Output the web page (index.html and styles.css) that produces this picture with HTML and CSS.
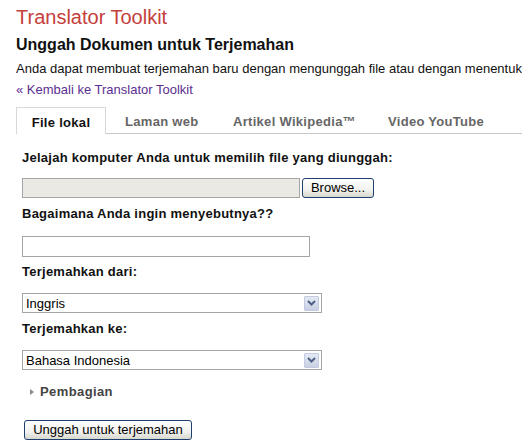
FILE: index.html
```html
<!DOCTYPE html>
<html>
<head>
<meta charset="utf-8">
<link rel="stylesheet" href="styles.css">
</head>
<body>
<div class="page">
  <h1 class="brand">Translator Toolkit</h1>
  <h2 class="heading">Unggah Dokumen untuk Terjemahan</h2>
  <p class="desc">Anda dapat membuat terjemahan baru dengan mengunggah file atau dengan menentukan URL halaman web.</p>
  <a class="back" href="#">« Kembali ke Translator Toolkit</a>
  <div class="tabs">
    <div class="tab active">File lokal</div>
    <div class="tab">Laman web</div>
    <div class="tab">Artikel Wikipedia™</div>
    <div class="tab">Video YouTube</div>
    <div class="tab-fill"></div>
  </div>
  <div class="form">
    <label class="lbl">Jelajah komputer Anda untuk memilih file yang diunggah:</label>
    <div class="file-row">
      <div class="file-box"></div>
      <button class="btn browse">Browse...</button>
    </div>
    <label class="lbl">Bagaimana Anda ingin menyebutnya??</label>
    <div class="text-box"></div>
    <label class="lbl">Terjemahkan dari:</label>
    <div class="select">
      <span class="sel-val">Inggris</span>
      <span class="sel-arrow"><svg width="9" height="6" viewBox="0 0 9 6"><path d="M1 1 L4.5 4.5 L8 1" fill="none" stroke="#4d6185" stroke-width="2"/></svg></span>
    </div>
    <label class="lbl">Terjemahkan ke:</label>
    <div class="select">
      <span class="sel-val">Bahasa Indonesia</span>
      <span class="sel-arrow"><svg width="9" height="6" viewBox="0 0 9 6"><path d="M1 1 L4.5 4.5 L8 1" fill="none" stroke="#4d6185" stroke-width="2"/></svg></span>
    </div>
    <div class="share"><span class="tri"></span>Pembagian</div>
    <button class="btn submit">Unggah untuk terjemahan</button>
  </div>
</div>
</body>
</html>
```
FILE: styles.css
```css
* { box-sizing: border-box; }
html, body { margin: 0; padding: 0; background: #fff; }
body { font-family: "Liberation Sans", Arial, sans-serif; color: #000; overflow: hidden; }
.page { padding: 0 0 0 16px; width: 522px; }
.brand { margin: 0 0 8px; padding-top: 6px; font-size: 20px; font-weight: normal; color: #c4403b; line-height: 22px; }
.heading { margin: 0; font-size: 16px; font-weight: bold; color: #111; line-height: 18px; }
.desc { margin: 7px 0 0; font-size: 13px; line-height: 16px; white-space: nowrap; overflow: hidden; color: #111; }
.back { display: block; font-size: 13px; color: #5b2f8f; text-decoration: none; line-height: 16px; margin-top: 5px; }
.tabs { display: flex; margin-top: 9px; height: 27px; }
.tab { font-size: 13px; font-weight: bold; color: #666; padding: 7px 0 0; line-height: 16px; border-bottom: 1px solid #c8c8c8; letter-spacing: 0.3px; }
.tab:nth-child(2) { padding-left: 19px; width: 109px; }
.tab:nth-child(3) { padding-left: 18px; width: 173px; }
.tab:nth-child(4) { padding-left: 0; width: 130px; }
.tab.active { width: 90px; color: #111; text-align: center; border: 1px solid #d8d8d8; border-bottom: none; background: #fff; }
.tab-fill { flex: 1; border-bottom: 1px solid #c8c8c8; }
.form { padding-left: 6px; padding-top: 16px; display: flex; flex-direction: column; align-items: flex-start; }
.lbl { font-size: 13px; font-weight: bold; color: #111; line-height: 16px; letter-spacing: 0.25px; }
.file-row { display: flex; align-items: center; margin-top: 12px; gap: 2px; }
.file-box { width: 278px; height: 20px; background: #ebe9e3; border: 1px solid #a5a5a5; }
.btn { font-family: "Liberation Sans", Arial, sans-serif; font-size: 13px; color: #000; border: 1px solid #1f3f6e; border-radius: 3px; background: linear-gradient(#ffffff, #f1f1ee 60%, #d8d8d0); padding: 0 6px; height: 20px; line-height: 18px; }
.browse { width: 72px; }
.file-row + .lbl { margin-top: 8px; }
.text-box { width: 288px; height: 21px; border: 1px solid #a5a5a5; margin-top: 14px; }
.text-box + .lbl { margin-top: 7px; }
.select { width: 300px; height: 20px; border: 1px solid #a5a5a5; margin-top: 13px; display: flex; align-items: center; justify-content: space-between; padding: 0 2px 0 3px; }
.select + .lbl { margin-top: 8px; }
.sel-val { font-size: 13px; color: #000; }
.sel-arrow { width: 15px; height: 15px; border: 1px solid #c2cbe0; background: linear-gradient(#e4e9f4, #c8d0e3); display: flex; align-items: center; justify-content: center; border-radius: 1px; }
.share { font-size: 13px; font-weight: bold; color: #444; line-height: 16px; letter-spacing: 0.4px; margin-top: 14px; display: flex; align-items: center; padding-left: 8px; }
.tri { width: 0; height: 0; border-left: 4px solid #888; border-top: 3.5px solid transparent; border-bottom: 3.5px solid transparent; margin-right: 6px; }
.submit { margin-top: 20px; margin-left: 2px; width: 168px; height: 20px; padding: 0; }
```
